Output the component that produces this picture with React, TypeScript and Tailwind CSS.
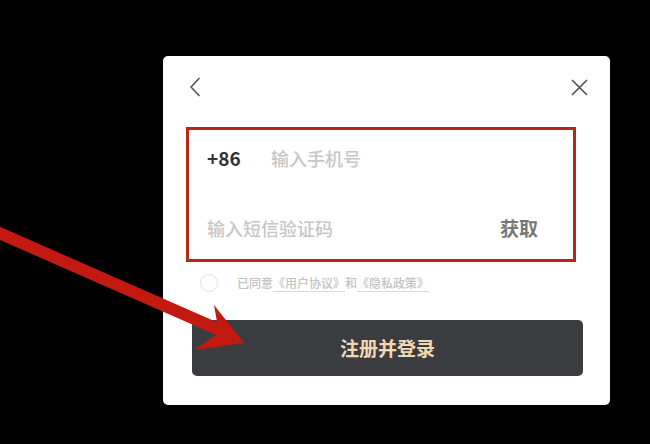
import React from "react";

export default function App() {
  const font = { fontFamily: '"Noto Sans CJK SC", "Noto Sans", sans-serif' };
  return (
    <div className="relative w-[650px] h-[444px] bg-black overflow-hidden" style={font}>
      <div className="pl-[163px] pt-[56px]">
        <div className="w-[447px] h-[349px] bg-white rounded-[5px] flex flex-col">
          <div className="flex justify-between items-center pl-[25px] pr-[22px] pt-[21px] h-[41px]">
            <svg width="14" height="20" viewBox="0 0 14 20" fill="none">
              <path d="M11 1.5 L3 10 L11 18.5" stroke="#555" strokeWidth="1.7" strokeLinecap="round" strokeLinejoin="round" />
            </svg>
            <svg width="17" height="17" viewBox="0 0 17 17" fill="none">
              <path d="M1.5 1.5 L15.5 15.5 M15.5 1.5 L1.5 15.5" stroke="#555" strokeWidth="1.7" strokeLinecap="round" />
            </svg>
          </div>
          <div className="ml-[23px] mt-[30px] w-[390px] h-[135px] border-[3px] border-[#b9241b] flex flex-col">
            <div className="h-[56px] flex items-center pl-[18px]">
              <span className="w-[64px] text-[19px] font-bold text-[#333]">+86</span>
              <span className="text-[18px] font-medium text-[#c6c6c6]">输入手机号</span>
            </div>
            <div className="mt-[14px] h-[56px] flex items-center justify-between pl-[18px] pr-[35px]">
              <span className="text-[18px] font-medium text-[#c6c6c6]">输入短信验证码</span>
              <span className="text-[19px] font-bold text-[#777]">获取</span>
            </div>
          </div>
          <div className="mt-[12px] ml-[37px] flex items-center h-[18px]">
            <div className="w-[18px] h-[18px] rounded-full border border-[#e2e2e2]" />
            <span className="ml-[19px] text-[12px] font-medium text-[#c3c3c3] leading-none">
              已同意<span className="border-b border-[#d8d8d8]">《用户协议》</span>和<span className="border-b border-[#d8d8d8]">《隐私政策》</span>
            </span>
          </div>
          <div className="mt-[28px] ml-[29px] w-[391px] h-[56px] rounded-[5px] bg-[#3b3c40] flex items-center justify-center">
            <span className="text-[19px] font-bold text-[#f0d8b2]">注册并登录</span>
          </div>
        </div>
      </div>
      <svg className="absolute left-0 top-0 pointer-events-none" width="650" height="444" viewBox="0 0 650 444">
        <line x1="-10" y1="229" x2="222" y2="331" stroke="#c21a10" strokeWidth="12" />
        <polygon points="214,305 244,343 194,350 219,333" fill="#c21a10" />
      </svg>
    </div>
  );
}
